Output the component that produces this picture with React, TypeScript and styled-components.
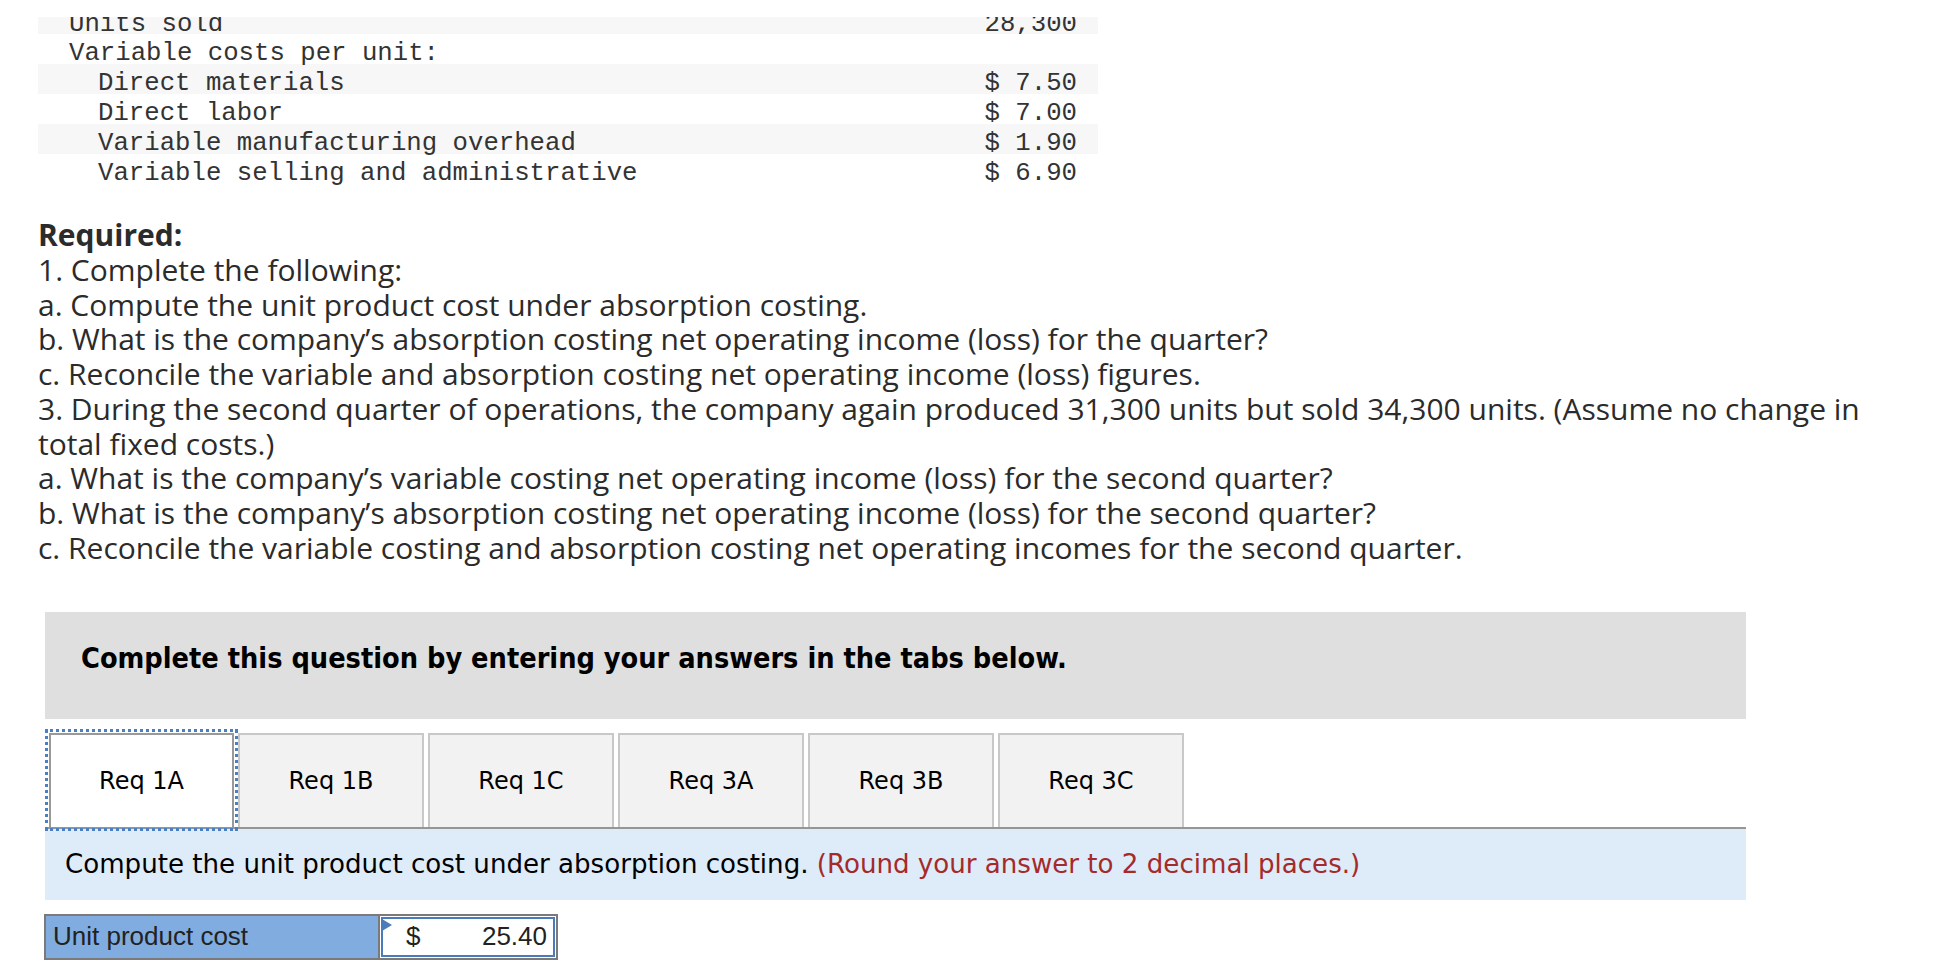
import React from "react";
import styled, { createGlobalStyle } from "styled-components";

const GlobalStyle = createGlobalStyle`
  html, body { margin: 0; padding: 0; background: #ffffff; }
  * { box-sizing: border-box; }
`;

const Page = styled.div`
  width: 1946px;
  min-height: 970px;
  overflow: hidden;
`;

const DataTable = styled.div`
  margin-left: 38px;
  width: 1060px;
  font-family: "Liberation Mono", "Courier New", monospace;
  font-size: 25.7px;
  color: #333333;
`;

const ClipRow = styled.div`
  margin-top: 17px;
  height: 17px;
  overflow: hidden;
  background: #f7f7f7;
`;

const DataRow = styled.div<{ $shaded?: boolean; $indent?: boolean; $shift?: number }>`
  display: flex;
  justify-content: space-between;
  height: 30px;
  padding-top: 10px;
  line-height: 20px;
  margin-top: ${(p) => (p.$shift ? `${p.$shift}px` : "0")};
  background: ${(p) => (p.$shaded ? "#f7f7f7" : "transparent")};
  padding-left: ${(p) => (p.$indent ? 60 : 31)}px;
  padding-right: 21px;
  white-space: pre;
`;

const Required = styled.div`
  margin: 34px 0 0 38px;
  width: 1880px;
  font-family: "Open Sans", Lato, sans-serif;
  font-size: 30px;
  line-height: 34.75px;
  color: #2b2b2b;
`;

const RequiredTitle = styled.div`
  font-weight: 700;
`;

const Line = styled.div``;

const QuestionBox = styled.div`
  margin: 46px 0 0 45px;
  width: 1701px;
  height: 107px;
  background: #dfdfdf;
  padding: 29px 0 0 36px;
  font-family: "DejaVu Sans Condensed", "DejaVu Sans", Verdana, sans-serif;
  font-weight: 700;
  font-size: 28.6px;
  line-height: 34px;
  color: #000;
`;

const TabBar = styled.div`
  margin: 14px 0 0 45px;
  width: 1701px;
  display: flex;
  gap: 4px;
  padding-left: 4px;
  border-bottom: 2px solid #969696;
`;

const Tab = styled.div<{ $active?: boolean }>`
  width: ${(p) => (p.$active ? 185 : 186)}px;
  height: 94px;
  border: 2px solid ${(p) => (p.$active ? "#999999" : "#c8c8c8")};
  border-bottom: none;
  background: ${(p) => (p.$active ? "#ffffff" : "#f2f2f2")};
  display: flex;
  align-items: center;
  justify-content: center;
  font-family: "DejaVu Sans", Verdana, sans-serif;
  font-size: 24px;
  color: #000;
  outline: ${(p) => (p.$active ? "3px dotted #4a7fc1" : "none")};
  outline-offset: 1px;
`;

const InstructionBar = styled.div`
  margin-left: 45px;
  width: 1701px;
  height: 71px;
  background: #deebf8;
  display: flex;
  align-items: center;
  padding-left: 20px;
  font-family: "DejaVu Sans", Verdana, sans-serif;
  font-size: 26.1px;
  color: #000;
  white-space: pre;
`;

const Hint = styled.span`
  color: #a52a2a;
`;

const AnswerRow = styled.div`
  margin: 14px 0 0 44px;
  display: inline-flex;
  border: 2px solid #7a7a7a;
  height: 46px;
  font-family: "Liberation Sans", Arial, sans-serif;
  font-size: 26px;
  color: #222;
`;

const LabelCell = styled.div`
  width: 334px;
  background: #80acdf;
  border-right: 2px solid #7a7a7a;
  display: flex;
  align-items: center;
  padding-left: 7px;
`;

const InputCell = styled.div`
  position: relative;
  width: 174px;
  margin: 1px;
  border: 2px solid #4a7bba;
  background: #fff;
  display: flex;
  align-items: center;
  justify-content: space-between;
  padding: 0 6px 0 23px;
`;

const Flag = styled.span`
  position: absolute;
  left: -1px;
  top: 0;
  width: 0;
  height: 0;
  border-top: 6px solid transparent;
  border-bottom: 6px solid transparent;
  border-left: 10px solid #4a7bba;
`;

const tabs = ["Req 1A", "Req 1B", "Req 1C", "Req 3A", "Req 3B", "Req 3C"];

export default function App() {
  return (
    <Page>
      <GlobalStyle />
      <DataTable>
        <ClipRow>
          <DataRow $shift={-12}>
            <span>Units sold</span>
            <span>28,300</span>
          </DataRow>
        </ClipRow>
        <DataRow>
          <span>Variable costs per unit:</span>
          <span></span>
        </DataRow>
        <DataRow $shaded $indent>
          <span>Direct materials</span>
          <span>$ 7.50</span>
        </DataRow>
        <DataRow $indent>
          <span>Direct labor</span>
          <span>$ 7.00</span>
        </DataRow>
        <DataRow $shaded $indent>
          <span>Variable manufacturing overhead</span>
          <span>$ 1.90</span>
        </DataRow>
        <DataRow $indent>
          <span>Variable selling and administrative</span>
          <span>$ 6.90</span>
        </DataRow>
      </DataTable>

      <Required>
        <RequiredTitle>Required:</RequiredTitle>
        <Line>1. Complete the following:</Line>
        <Line>a. Compute the unit product cost under absorption costing.</Line>
        <Line>b. What is the company’s absorption costing net operating income (loss) for the quarter?</Line>
        <Line>c. Reconcile the variable and absorption costing net operating income (loss) figures.</Line>
        <Line>
          3. During the second quarter of operations, the company again produced 31,300 units but sold 34,300 units. (Assume no change in
          <br />
          total fixed costs.)
        </Line>
        <Line>a. What is the company’s variable costing net operating income (loss) for the second quarter?</Line>
        <Line>b. What is the company’s absorption costing net operating income (loss) for the second quarter?</Line>
        <Line>c. Reconcile the variable costing and absorption costing net operating incomes for the second quarter.</Line>
      </Required>

      <QuestionBox>Complete this question by entering your answers in the tabs below.</QuestionBox>

      <TabBar>
        {tabs.map((t, i) => (
          <Tab key={t} $active={i === 0}>
            {t}
          </Tab>
        ))}
      </TabBar>

      <InstructionBar>
        Compute the unit product cost under absorption costing. <Hint>(Round your answer to 2 decimal places.)</Hint>
      </InstructionBar>

      <AnswerRow>
        <LabelCell>Unit product cost</LabelCell>
        <InputCell>
          <Flag />
          <span>$</span>
          <span>25.40</span>
        </InputCell>
      </AnswerRow>
    </Page>
  );
}
